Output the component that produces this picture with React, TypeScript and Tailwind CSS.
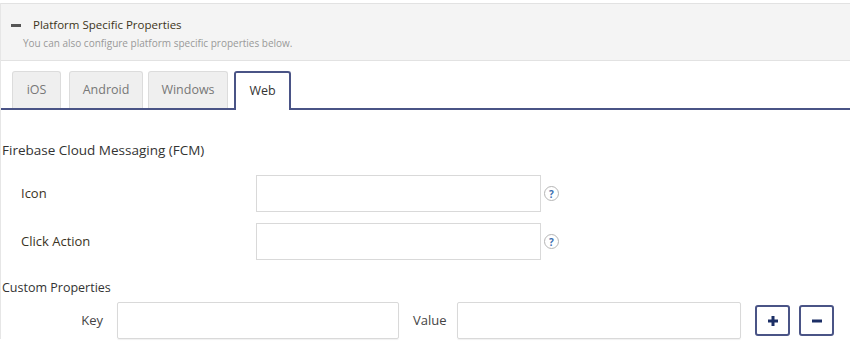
import React from "react";

function Help() {
  return (
    <span className="ml-[3px] flex h-[15px] w-[15px] items-center justify-center rounded-full border border-[#b5b5b5] text-[10px] font-bold leading-none text-[#3c6fb0]">
      ?
    </span>
  );
}

export default function App() {
  const font = { fontFamily: '"Open Sans", "Noto Sans", sans-serif' };
  const tabs: [string, string][] = [
    ["iOS", "w-[49px]"],
    ["Android", "w-[74px]"],
    ["Windows", "w-[80px]"],
  ];
  return (
    <div className="h-[351px] w-[850px] overflow-hidden bg-white" style={font}>
      <div className="mt-[3px] border-l border-[#e6e6e6]">
        <div className="h-[58px] border-y border-[#e2e2e2] bg-[#f4f4f4] pl-[10px] pt-[13px]">
          <div className="flex items-center">
            <span className="h-[3px] w-[10px] bg-[#555]" />
            <span className="ml-[12px] text-[11.5px] leading-[16px] text-[#3d3520]">
              Platform Specific Properties
            </span>
          </div>
          <div className="ml-[12px] mt-[3px] text-[10px] leading-[14px] text-[#999]">
            You can also configure platform specific properties below.
          </div>
        </div>
        <div className="mt-[10px] flex border-b-2 border-[#4a5486] pl-[11px]">
          {tabs.map(([t, w], i) => (
            <div
              key={t}
              className={`${w} ${i === 0 ? "" : i === 1 ? "ml-[8px]" : "ml-[5px]"} flex h-[37px] items-center justify-center rounded-t-[3px] border border-b-0 border-[#dcdcdc] bg-[#efefef] text-[12.5px] text-[#777]`}
            >
              {t}
            </div>
          ))}
          <div className="-mb-[2px] ml-[6px] flex h-[39px] w-[57px] items-center justify-center rounded-t-[3px] border-2 border-b-0 border-[#4a5486] bg-white text-[12.5px] text-[#333]">
            Web
          </div>
        </div>
        <div className="mt-[30px] pl-[1px] text-[13.5px] leading-[20px] text-[#333]">
          Firebase Cloud Messaging (FCM)
        </div>
        <div className="mt-[15px] flex items-center">
          <div className="w-[255px] pl-[20px] text-[13px] text-[#3b3324]">Icon</div>
          <div className="h-[37px] w-[285px] border border-[#d9d9d9]" />
          <Help />
        </div>
        <div className="mt-[11px] flex items-center">
          <div className="w-[255px] pl-[20px] text-[13px] text-[#3b3324]">Click Action</div>
          <div className="h-[37px] w-[285px] border border-[#d9d9d9]" />
          <Help />
        </div>
        <div className="mt-[19px] pl-[1px] text-[12.5px] leading-[18px] text-[#333]">
          Custom Properties
        </div>
        <div className="mt-[5px] flex items-center">
          <div className="w-[102px] text-right text-[13px] text-[#444]">Key</div>
          <div className="ml-[14px] h-[37px] w-[282px] rounded-[2px] border border-[#d9d9d9] shadow-[0_1px_1px_rgba(0,0,0,0.06)]" />
          <div className="ml-[14px] w-[44px] text-[13px] text-[#444]">Value</div>
          <div className="h-[37px] w-[284px] rounded-[2px] border border-[#d9d9d9] shadow-[0_1px_1px_rgba(0,0,0,0.06)]" />
          <div className="ml-[14px] flex h-[31px] w-[35px] items-center justify-center rounded-[3px] border-2 border-[#4a5486]">
            <svg width="10" height="10" viewBox="0 0 10 10">
              <rect x="0" y="3.5" width="10" height="3" fill="#1c2f66" />
              <rect x="3.5" y="0" width="3" height="10" fill="#1c2f66" />
            </svg>
          </div>
          <div className="ml-[9px] flex h-[31px] w-[35px] items-center justify-center rounded-[3px] border-2 border-[#4a5486]">
            <svg width="10" height="10" viewBox="0 0 10 10">
              <rect x="0" y="3.5" width="10" height="3" fill="#1c2f66" />
            </svg>
          </div>
        </div>
      </div>
    </div>
  );
}
